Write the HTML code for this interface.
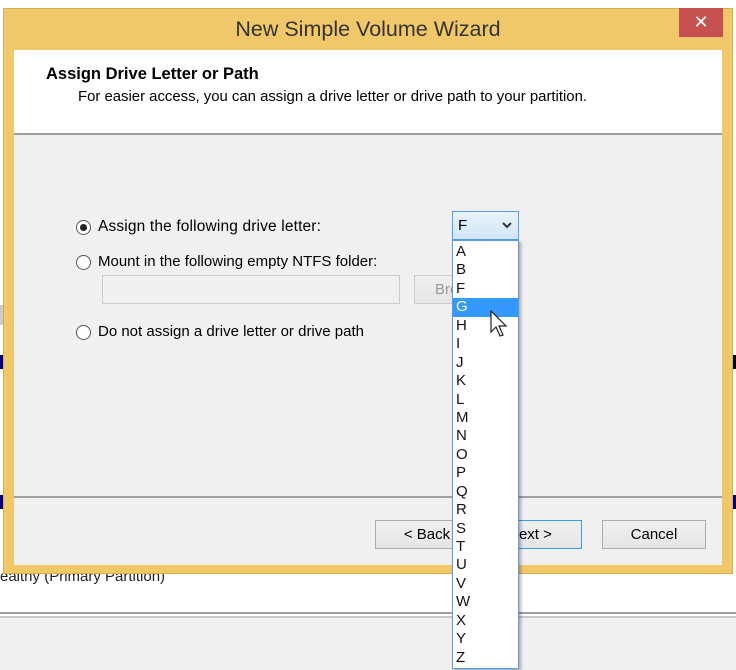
<!DOCTYPE html>
<html><head><style>
*{margin:0;padding:0;box-sizing:border-box}
body{width:736px;height:670px;overflow:hidden;background:#fff;font-family:"Liberation Sans",sans-serif;position:relative;color:#000}
.a{position:absolute}
.t{font-size:15px;white-space:nowrap}
.btn{position:absolute;height:29px;border:1px solid #acacac;background:linear-gradient(#f0f0f0,#e5e5e5);font-size:15px;text-align:center;line-height:27px}
.rad{position:absolute;width:15px;height:15px;border:1px solid #555;border-radius:50%;background:#fff}
.li{height:18.45px;line-height:18px;font-size:15px;padding-left:3px;color:#111}
</style></head><body>
<div class="a" style="left:0;top:612px;width:736px;height:2px;background:#a0a0a0"></div>
<div class="a" style="left:0;top:616px;width:736px;height:2px;background:#c8c8c8"></div>
<div class="a" style="left:0;top:618px;width:736px;height:52px;background:#f0f0f0"></div>
<div class="a t" style="left:0;top:568px;font-size:15px;color:#222">ealthy (Primary Partition)</div>
<div class="a" style="left:0;top:305px;width:4px;height:20px;background:#ccc"></div>
<div class="a" style="left:0;top:355px;width:4px;height:14px;background:#000080"></div>
<div class="a" style="left:0;top:495px;width:4px;height:14px;background:#000080"></div>
<div class="a" style="left:730px;top:355px;width:6px;height:14px;background:#000"></div>
<div class="a" style="left:730px;top:495px;width:6px;height:14px;background:#000080"></div>
<!-- window -->
<div class="a" style="left:3px;top:8px;width:730px;height:566px;background:#f0c869;border:1px solid #d9ae4e"></div>
<div class="a" style="left:0;top:17px;width:736px;text-align:center;font-size:21.5px;color:#333">New Simple Volume Wizard</div>
<div class="a" style="left:679px;top:8px;width:44px;height:29px;background:#c75050;color:#fff;font-size:18px;text-align:center;line-height:28px">✕</div>
<div class="a" style="left:14px;top:50px;width:708px;height:515px;background:#f0f0f0"></div>
<div class="a" style="left:14px;top:50px;width:708px;height:85px;background:#fff;border-bottom:2px solid #a0a0a0"></div>
<div class="a t" style="left:46px;top:65px;font-weight:bold;font-size:16.5px">Assign Drive Letter or Path</div>
<div class="a t" style="left:78px;top:89px;font-size:14.9px">For easier access, you can assign a drive letter or drive path to your partition.</div>
<div class="rad" style="left:76px;top:220px"><div style="position:absolute;left:3px;top:3px;width:7px;height:7px;border-radius:50%;background:#222"></div></div>
<div class="a t" style="left:98px;top:218px;font-size:15.5px;letter-spacing:0.15px">Assign the following drive letter:</div>
<div class="rad" style="left:76px;top:255px"></div>
<div class="a t" style="left:98px;top:253px">Mount in the following empty NTFS folder:</div>
<div class="a" style="left:102px;top:275px;width:298px;height:29px;border:1px solid #ccc;background:#f0f0f0"></div>
<div class="btn" style="left:414px;top:275px;width:90px;color:#999;text-align:left;padding-left:20px;border-color:#ccc">Browse...</div>
<div class="rad" style="left:76px;top:325px"></div>
<div class="a t" style="left:98px;top:323px">Do not assign a drive letter or drive path</div>
<div class="a" style="left:14px;top:496px;width:708px;height:2px;background:#a0a0a0"></div>
<div class="btn" style="left:375px;top:520px;width:104px">&lt; Back</div>
<div class="btn" style="left:478px;top:520px;width:104px;border-color:#3c9be8">Next &gt;</div>
<div class="btn" style="left:602px;top:520px;width:104px">Cancel</div>
<!-- dropdown -->
<div class="a" style="left:452px;top:211px;width:67px;height:29px;border:1px solid #569de5;background:linear-gradient(#eaf4fc,#cfe6f9);font-size:15px;line-height:27px;padding-left:5px">F<svg style="position:absolute;right:6px;top:10px" width="10" height="7"><path d="M1 1L5 5L9 1" stroke="#333" stroke-width="2" fill="none"/></svg></div>
<div class="a" style="left:452px;top:240px;width:67px;height:429px;border:1px solid #569de5;background:#fff;box-shadow:2px 2px 3px rgba(0,0,0,.3);padding-top:2px">
<div class="li">A</div><div class="li">B</div><div class="li">F</div><div class="li" style="background:#3399ff;color:#fff">G</div><div class="li">H</div><div class="li">I</div><div class="li">J</div><div class="li">K</div><div class="li">L</div><div class="li">M</div><div class="li">N</div><div class="li">O</div><div class="li">P</div><div class="li">Q</div><div class="li">R</div><div class="li">S</div><div class="li">T</div><div class="li">U</div><div class="li">V</div><div class="li">W</div><div class="li">X</div><div class="li">Y</div><div class="li">Z</div>
</div>
<svg class="a" style="left:490px;top:310px" width="20" height="30"><path d="M1 1L1 22L6 17L10 26L13 25L9 16L16 16Z" fill="#fff" stroke="#222" stroke-width="1.2"/></svg>
</body></html>
